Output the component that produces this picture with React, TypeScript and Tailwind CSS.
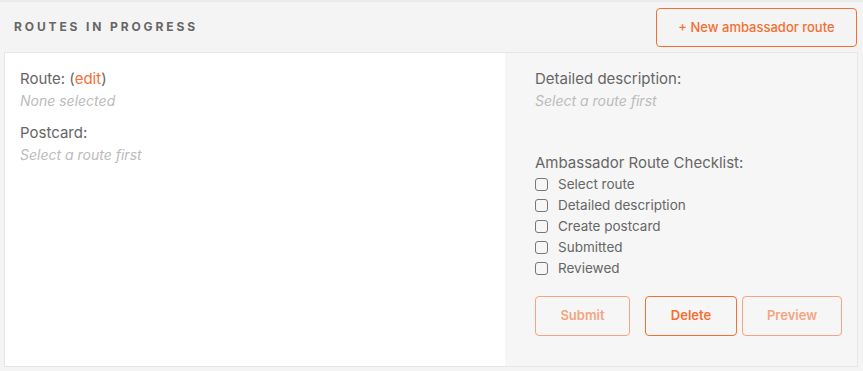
import React from "react";

const checklist = [
    "Select route",
    "Detailed description",
    "Create postcard",
    "Submitted",
    "Reviewed",
];

function Field({ label, value }: { label: React.ReactNode; value: string }) {
    return (
        <div className="flex flex-col">
            <div className="text-[15px] leading-[22px] text-[#666]">{label}</div>
            <div className="text-[14px] leading-[22px] italic text-[#bbb]">{value}</div>
        </div>
    );
}

export default function App() {
    return (
        <div
            className="w-[863px] h-[371px] bg-[#f4f4f4] border-t-2 border-[#ebebeb] flex flex-col"
            style={{ fontFamily: "Inter, 'Noto Sans', sans-serif" }}
        >
            <div className="flex items-center justify-between pl-[14px] pr-[6px] pt-[6px]">
                <h2 className="pb-[2px] text-[12px] font-bold tracking-[0.24em] text-[#666] uppercase">
                    Routes in progress
                </h2>
                <button className="w-[201px] h-[39px] border border-[#f36f32] rounded-[4px] text-[13px] font-medium text-[#f36f32]">
                    + New ambassador route
                </button>
            </div>

            <div className="mt-[5px] ml-[4px] w-[854px] h-[315px] border border-[#e6e6e6] flex">
                <div className="w-[500px] bg-white pl-[15px] pt-[15px] flex flex-col gap-[10px]">
                    <Field
                        label={
                            <>
                                Route: (<span className="text-[#f36f32]">edit</span>)
                            </>
                        }
                        value="None selected"
                    />
                    <Field label="Postcard:" value="Select a route first" />
                </div>

                <div className="flex-1 bg-[#f6f6f6] pl-[30px] pt-[15px] flex flex-col">
                    <Field label="Detailed description:" value="Select a route first" />

                    <div className="mt-[40px] text-[15px] leading-[22px] text-[#666]">
                        Ambassador Route Checklist:
                    </div>
                    <ul className="flex flex-col">
                        {checklist.map((item) => (
                            <li key={item} className="flex items-center h-[21px] text-[13.5px] text-[#666]">
                                <span className="w-[13px] h-[13px] border-[1.5px] border-[#777] rounded-[3px] mr-[10px]" />
                                {item}
                            </li>
                        ))}
                    </ul>

                    <div className="flex mt-[17px]">
                        <button className="w-[95px] h-[40px] border border-[#f36f32] rounded-[4px] text-[13px] font-semibold text-[#f36f32] opacity-60">
                            Submit
                        </button>
                        <button className="ml-[15px] w-[92px] h-[40px] border border-[#f36f32] rounded-[4px] text-[13px] font-semibold text-[#f36f32]">
                            Delete
                        </button>
                        <button className="ml-[5px] w-[100px] h-[40px] border border-[#f36f32] rounded-[4px] text-[13px] font-semibold text-[#f36f32] opacity-60">
                            Preview
                        </button>
                    </div>
                </div>
            </div>
        </div>
    );
}
